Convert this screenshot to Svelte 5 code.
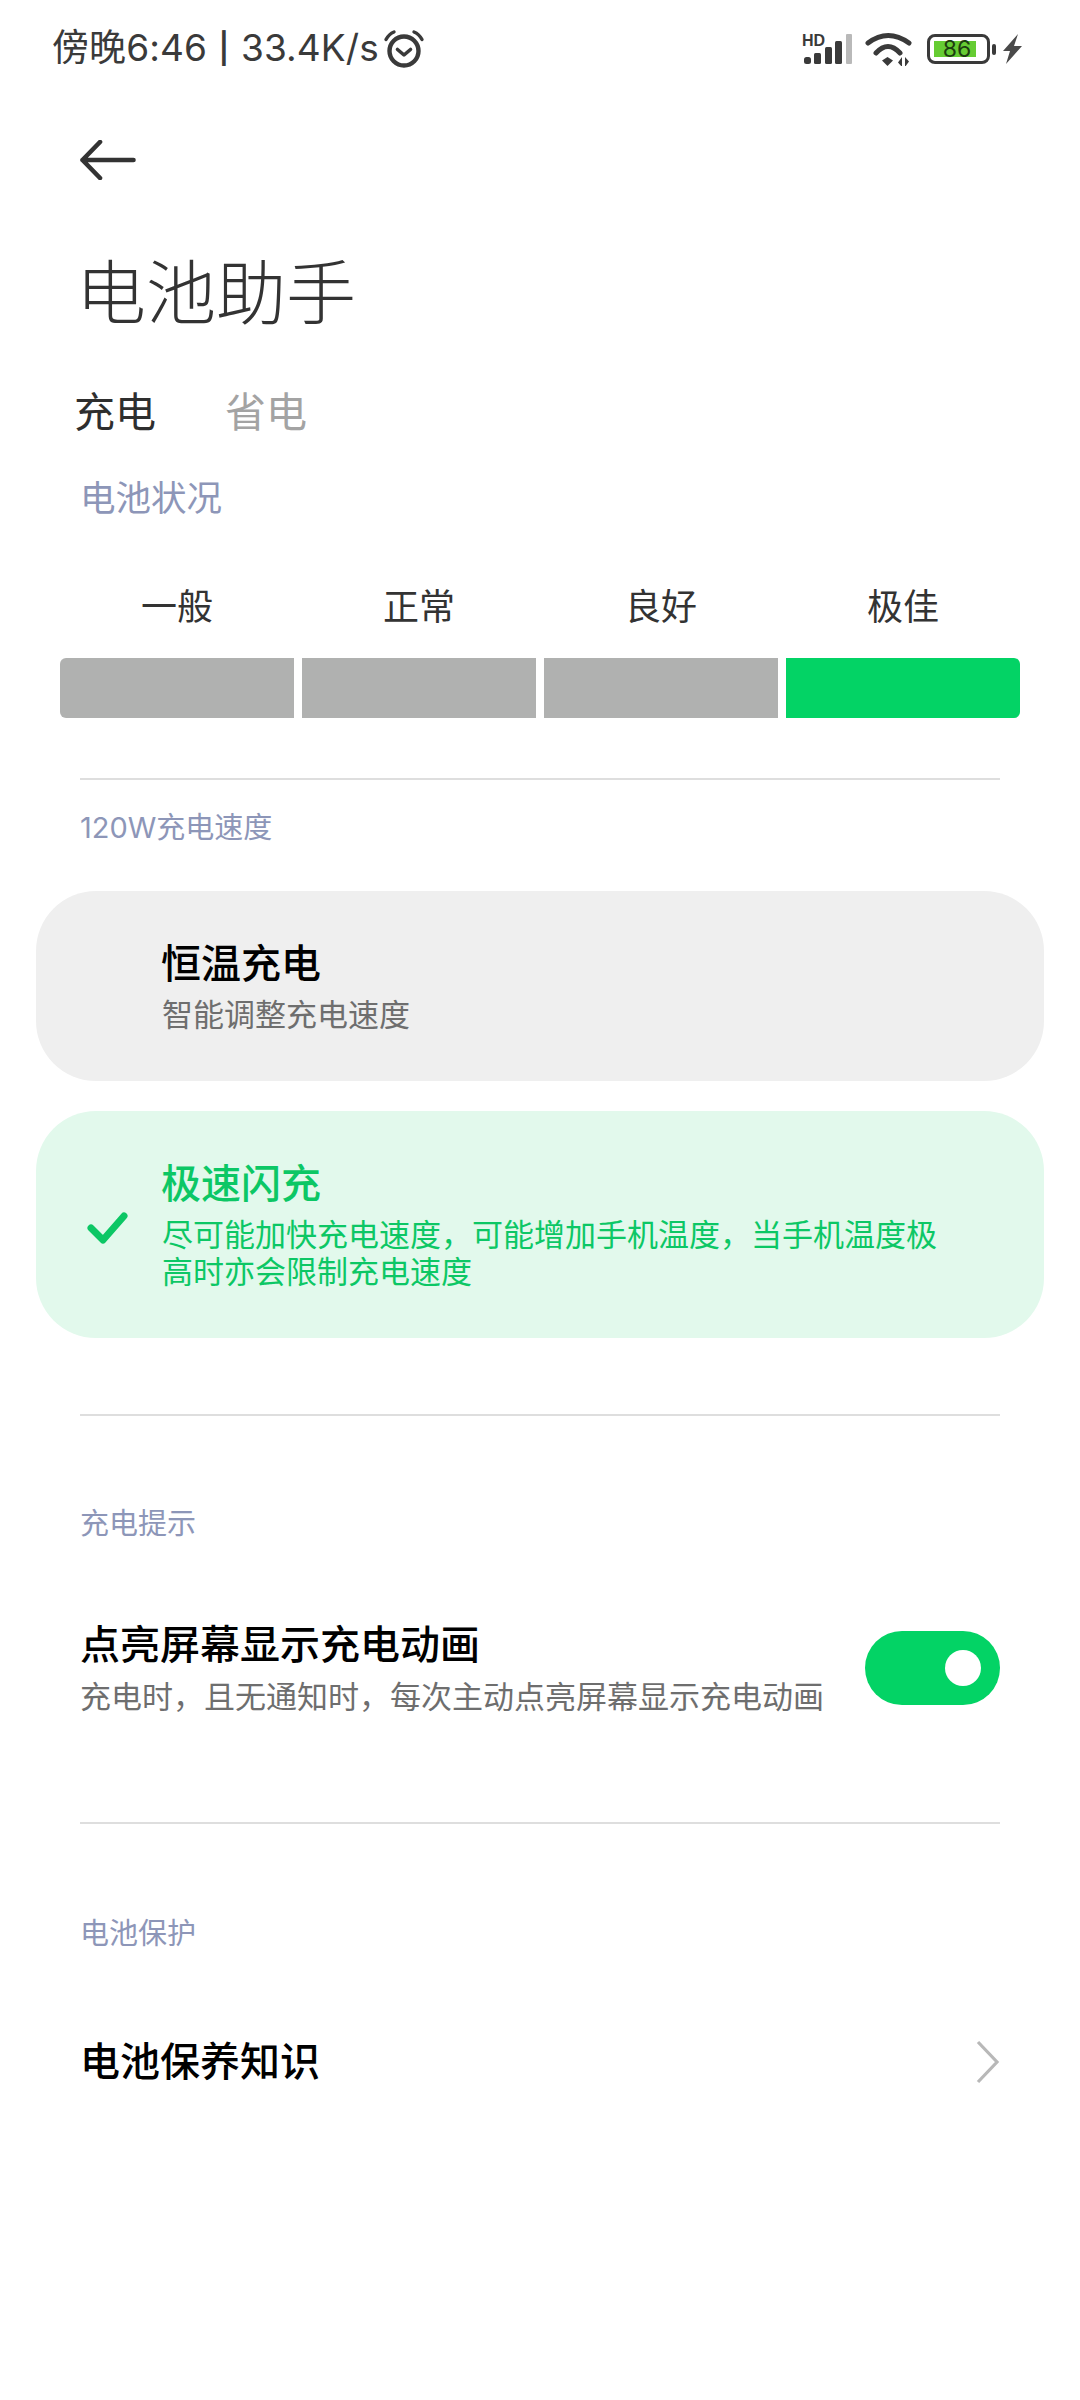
<script>
  const levels = [
    { label: '一般', on: false },
    { label: '正常', on: false },
    { label: '良好', on: false },
    { label: '极佳', on: true }
  ];
</script>

<div class="page">
  <header class="status">
    <div class="status-left">
      <span class="status-text">傍晚6:46 <span class="sep">|</span> 33.4K/s</span>
      <svg width="42" height="42" viewBox="0 0 42 42" fill="none" stroke="#3a3a3a">
        <circle cx="21" cy="23" r="14.5" stroke-width="4.4"/>
        <path d="M14.5 21.5 21 27l6.500-5.500" stroke-width="3.600" stroke-linecap="round" stroke-linejoin="round"/>
        <path d="M3 11.500Q6 6 11 4M39 11.500Q36 6 31 4" stroke-width="3.400" stroke-linecap="round"/>
      </svg>
    </div>
    <div class="status-right">
      <svg class="signal" width="50" height="38" viewBox="0 -4 50 38">
        <text x="0" y="11.500" class="hd">HD</text>
        <rect x="2" y="23" width="7" height="7" rx="2.500" fill="#3a3a3a"/>
        <rect x="12" y="19" width="7" height="11" rx="1.500" fill="#3a3a3a"/>
        <rect x="23" y="13" width="7" height="17" rx="1.500" fill="#3a3a3a"/>
        <rect x="33" y="7" width="7" height="23" rx="1.500" fill="#3a3a3a"/>
        <rect x="44" y="0" width="6" height="30" rx="1" fill="#b9b9b9"/>
      </svg>
      <svg class="wifi" width="47" height="34" viewBox="0 0 47 34" fill="none">
        <path d="M3 11Q23-4 44 11M11 21Q23 8 35 21" stroke="#3a3a3a" stroke-width="5" stroke-linecap="round"/>
        <path d="M17 28.500 22.500 25 28 28.500 22.500 34z" fill="#3a3a3a"/>
        <path d="M37 35V25l-4 5.500zM40 25v10l4-5.500z" fill="#3a3a3a"/>
      </svg>
      <div class="battery">
        <div class="battery-body"><span class="battery-fill">86</span></div>
        <span class="battery-cap"></span>
      </div>
      <svg class="bolt" width="19" height="30" viewBox="0 0 19 30">
        <path d="M15 0 0 17h7l-4 13L19 12h-8z" fill="#4a4a4a"/>
      </svg>
    </div>
  </header>

  <svg class="back" width="56" height="40" viewBox="0 0 56 40" fill="none" stroke="#333" stroke-width="4.600" stroke-linecap="round" stroke-linejoin="round">
    <path d="M20 2 2.500 20 20 38M2.500 20h51"/>
  </svg>

  <h1>电池助手</h1>

  <nav class="tabs">
    <span class="tab active">充电</span>
    <span class="tab">省电</span>
  </nav>

  <div class="status-title">电池状况</div>

  <div class="levels">
    {#each levels as level}
      <div class="level">
        <span class="level-label">{level.label}</span>
        <span class="bar" class:on={level.on}></span>
      </div>
    {/each}
  </div>

  <hr class="div-first" />

  <div class="section speed">120W充电速度</div>

  <div class="card plain">
    <div class="card-text">
      <div class="card-title">恒温充电</div>
      <div class="card-sub">智能调整充电速度</div>
    </div>
  </div>

  <div class="card selected">
    <svg class="check" width="44" height="34" viewBox="0 0 44 34" fill="none" stroke="#0cc765" stroke-width="7" stroke-linecap="round" stroke-linejoin="round">
      <path d="M5 17 17 29 38 5"/>
    </svg>
    <div class="card-text">
      <div class="card-title">极速闪充</div>
      <div class="card-sub">尽可能加快充电速度，可能增加手机温度，当手机温度极<br />高时亦会限制充电速度</div>
    </div>
  </div>

  <hr class="div-second" />

  <div class="section tip">充电提示</div>

  <div class="row toggle-row">
    <div>
      <div class="row-title">点亮屏幕显示充电动画</div>
      <div class="row-sub">充电时，且无通知时，每次主动点亮屏幕显示充电动画</div>
    </div>
    <div class="toggle"><span class="knob"></span></div>
  </div>

  <hr class="div-third" />

  <div class="section protect">电池保护</div>

  <div class="row link-row">
    <div class="row-title">电池保养知识</div>
    <svg class="chevron" width="24" height="44" viewBox="0 0 24 44" fill="none" stroke="#b8b8b8" stroke-width="3.200">
      <path d="M2 2 21 22 2 42"/>
    </svg>
  </div>
</div>

<style>
  :global(body) {
    margin: 0;
    background: #fff;
  }
  .page {
    width: 1080px;
    height: 2400px;
    overflow: hidden;
    box-sizing: border-box;
    font-family: "Inter", "Noto Sans CJK SC", sans-serif;
    color: #000;
  }
  .status {
    height: 98px;
    box-sizing: border-box;
    padding: 27px 58px 0 52px;
    display: flex;
    justify-content: space-between;
    align-items: flex-start;
  }
  .status-left {
    display: flex;
    align-items: center;
    gap: 4px;
    height: 44px;
    line-height: 44px;
    color: #3a3a3a;
  }
  .status-text {
    font-size: 37px;
    letter-spacing: 0.1px;
    word-spacing: 1px;
  }
  .sep {
    font-size: 30px;
    font-weight: 600;
    position: relative;
    top: -2px;
  }
  .status-right {
    display: flex;
    align-items: center;
    height: 44px;
    gap: 13px;
  }
  .hd {
    font: 700 16px "Liberation Sans", sans-serif;
    fill: #3a3a3a;
  }
  .wifi {
    margin-right: 2px;
  }
  .battery {
    display: flex;
    align-items: center;
    gap: 2px;
    margin-right: -6px;
  }
  .battery-body {
    width: 63px;
    height: 30px;
    box-sizing: border-box;
    border: 3.500px solid #3a3a3a;
    border-radius: 8px;
    padding: 4px 11px 4px 4px;
    display: flex;
  }
  .battery-fill {
    flex: 1;
    background: #66cc33;
    color: #1d3d10;
    font-size: 23px;
    line-height: 16px;
    text-align: center;
    padding-left: 4px;
  }
  .battery-cap {
    width: 4px;
    height: 11px;
    background: #3a3a3a;
    border-radius: 2px;
  }
  .back {
    display: block;
    margin: 42px 0 0 80px;
  }
  h1 {
    margin: 74px 0 0 76px;
    font-size: 70px;
    line-height: 80px;
    font-weight: 300;
    color: #333;
  }
  .tabs {
    display: flex;
    gap: 69px;
    margin: 48px 0 0 74px;
  }
  .tab {
    font-size: 41px;
    line-height: 60px;
    color: #a3a3a3;
  }
  .tab.active {
    color: #2e2e2e;
  }
  .status-title {
    margin: 35px 0 0 80px;
    font-size: 35.500px;
    line-height: 44px;
    color: #8d96b8;
  }
  .levels {
    display: grid;
    grid-template-columns: repeat(4, 1fr);
    gap: 8px;
    margin: 64px 60px 0 60px;
  }
  .level {
    display: flex;
    flex-direction: column;
    align-items: center;
    gap: 29px;
  }
  .level-label {
    font-size: 36px;
    line-height: 44px;
    color: #333;
  }
  .bar {
    width: 100%;
    height: 60px;
    background: #b0b1b0;
  }
  .level:first-child .bar {
    border-radius: 6px 0 0 6px;
  }
  .level:last-child .bar {
    border-radius: 0 6px 6px 0;
  }
  .bar.on {
    background: #03d365;
  }
  hr {
    height: 2px;
    border: 0;
    background: #dedede;
    margin: 0 80px;
  }
  .div-first {
    margin-top: 60px;
  }
  .section {
    margin-left: 80px;
    font-size: 29px;
    line-height: 40px;
    color: #8d96b8;
  }
  .speed {
    margin-top: 28px;
  }
  .card {
    margin: 0 36px;
    border-radius: 60px;
    display: flex;
    align-items: center;
    box-sizing: border-box;
    position: relative;
    padding-left: 126px;
  }
  .plain {
    margin-top: 43px;
    height: 190px;
    background: #efefef;
  }
  .selected {
    margin-top: 30px;
    height: 227px;
    background: #e2f9ec;
    color: #0cc765;
  }
  .check {
    position: absolute;
    left: 50px;
    top: 100px;
  }
  .card-title {
    margin: -2px 0 0 -1px;
    font-size: 40px;
    line-height: 52px;
    font-weight: 500;
  }
  .card-sub {
    margin-top: 6px;
    font-size: 31px;
    line-height: 37px;
    color: #6e6e6e;
  }
  .selected .card-sub {
    color: #0cc765;
  }
  .div-second {
    margin-top: 76px;
  }
  .tip {
    margin-top: 88px;
  }
  .row {
    display: flex;
    justify-content: space-between;
    align-items: center;
    margin: 0 80px 0 80px;
  }
  .toggle-row {
    margin-top: 75px;
  }
  .row-title {
    font-size: 40px;
    line-height: 52px;
    font-weight: 500;
  }
  .row-sub {
    margin-top: 6px;
    font-size: 31px;
    line-height: 40px;
    color: #6e6e6e;
  }
  .toggle {
    width: 135px;
    height: 74px;
    border-radius: 37px;
    background: #03d365;
    display: flex;
    align-items: center;
    justify-content: flex-end;
    padding-right: 19px;
    box-sizing: border-box;
  }
  .knob {
    width: 36px;
    height: 36px;
    border-radius: 50%;
    background: #fff;
  }
  .div-third {
    margin-top: 105px;
  }
  .protect {
    margin-top: 90px;
  }
  .link-row {
    margin-top: 82px;
  }
</style>
